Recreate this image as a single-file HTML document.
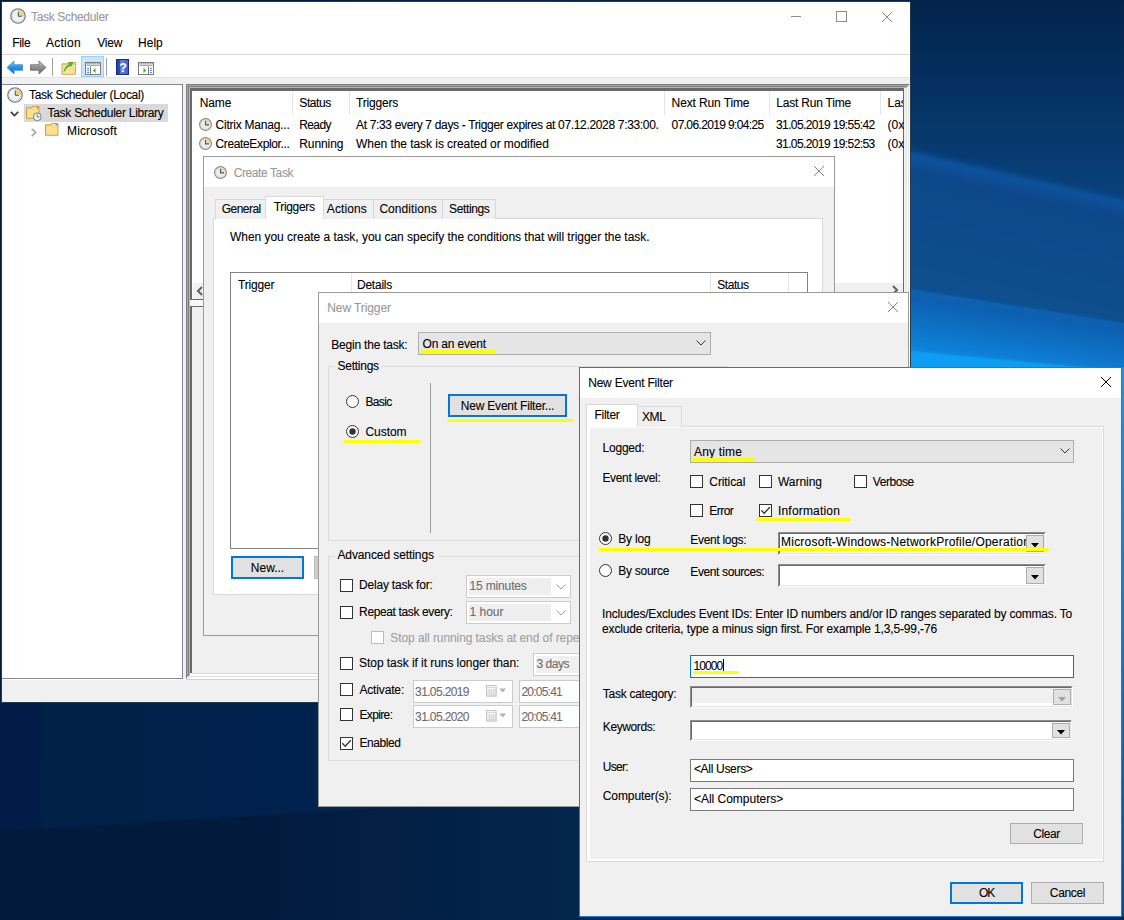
<!DOCTYPE html>
<html><head><meta charset="utf-8"><style>
*{box-sizing:border-box;margin:0;padding:0}
html,body{width:1124px;height:920px;overflow:hidden}
body{position:relative;font-family:"Liberation Sans", sans-serif;font-size:12px;color:#000;background:#05234a}
.a{position:absolute}
.t{position:absolute;white-space:pre;line-height:15px;height:15px;font-size:12px;-webkit-text-stroke:0.1px currentColor}
svg{position:absolute;overflow:visible}
</style></head><body>
<svg class="a" style="left:0;top:0" width="1124" height="920">
<defs>
<linearGradient id="wtop" x1="0" y1="0" x2="0" y2="1"><stop offset="0" stop-color="#02234b"/><stop offset="1" stop-color="#0a4886"/></linearGradient>
<linearGradient id="wmid" gradientUnits="userSpaceOnUse" x1="1017" y1="178" x2="990" y2="300"><stop offset="0" stop-color="#0a54a0"/><stop offset="0.12" stop-color="#08478a"/><stop offset="1" stop-color="#07508f"/></linearGradient>
<linearGradient id="wlow" gradientUnits="userSpaceOnUse" x1="1017" y1="305" x2="1007" y2="370"><stop offset="0" stop-color="#0c66b8"/><stop offset="0.1" stop-color="#0a5eae"/><stop offset="1" stop-color="#0a88e0"/></linearGradient>
<linearGradient id="wbl" x1="0" y1="0" x2="1" y2="0"><stop offset="0" stop-color="#021f46"/><stop offset="1" stop-color="#032a5a"/></linearGradient>
<filter id="bl" x="-10%" y="-10%" width="120%" height="120%"><feGaussianBlur stdDeviation="3"/></filter>
<filter id="bl1" x="-10%" y="-10%" width="120%" height="120%"><feGaussianBlur stdDeviation="1"/></filter>
</defs>
<linearGradient id="wbase" gradientUnits="userSpaceOnUse" x1="250" y1="0" x2="600" y2="0"><stop offset="0" stop-color="#021a3c"/><stop offset="1" stop-color="#03274f"/></linearGradient>
<rect width="1124" height="920" fill="url(#wbase)"/>
<rect x="600" y="0" width="524" height="240" fill="url(#wtop)"/>
<polygon points="600,80 1124,200 1200,218 1200,340 1124,330 600,250" fill="url(#wmid)" filter="url(#bl)"/>
<polygon points="600,240 1124,323 1200,335 1200,960 600,960" fill="url(#wlow)" filter="url(#bl1)"/>
<polygon points="700,331 1124,371 1200,378 1200,960 700,960" fill="#0c9ef4" filter="url(#bl1)"/>
<polygon points="0,702 600,702 600,795 0,831" fill="url(#wbl)" filter="url(#bl1)"/>
<linearGradient id="wrs" x1="0" y1="0" x2="0" y2="1"><stop offset="0" stop-color="#2294e4"/><stop offset="0.5" stop-color="#1a74c4"/><stop offset="1" stop-color="#0b4788"/></linearGradient>
<rect x="1121" y="367" width="10" height="560" fill="url(#wrs)"/>
<rect x="579" y="916" width="560" height="10" fill="#04285a"/>
</svg>
<div class="a" style="left:1px;top:1px;width:910px;height:702px;background:#fff;border:1px solid #26384e"></div>
<svg class="a" style="left:10px;top:8px" width="16" height="16" viewBox="0 0 16 16"><g transform="scale(1.0)"><circle cx="8" cy="8" r="7.2" fill="#eef3f8" stroke="#7c7c7c" stroke-width="1.3"/><path d="M8 1.9 A6.1 6.1 0 0 1 14.1 8 L8 8 Z" fill="#f1d27e"/><circle cx="8" cy="8" r="6.1" fill="none" stroke="#c3ccd6" stroke-width="0.6"/><path d="M8.3 3.8 V8.3 H11.8" fill="none" stroke="#43596c" stroke-width="1"/></g></svg>
<span class="t" style="left:31px;top:10px;color:#999;letter-spacing:-0.332px;">Task Scheduler</span>
<div class="a" style="left:791px;top:16px;width:10px;height:1px;background:#8c8c8c"></div>
<div class="a" style="left:836px;top:11px;width:11px;height:11px;border:1px solid #8c8c8c"></div>
<svg class="a" style="left:881px;top:11px" width="12" height="12" viewBox="0 0 12 12"><path d="M1 1 L11 11 M11 1 L1 11" stroke="#8c8c8c" stroke-width="1"/></svg>
<span class="t" style="left:12.3px;top:36px;color:#000;letter-spacing:-0.336px;">File</span>
<span class="t" style="left:46px;top:36px;color:#000;letter-spacing:0.240px;">Action</span>
<span class="t" style="left:97.2px;top:36px;color:#000;letter-spacing:-0.199px;">View</span>
<span class="t" style="left:138.1px;top:36px;color:#000;letter-spacing:-0.022px;">Help</span>
<div class="a" style="left:2px;top:54px;width:908px;height:1px;background:#d7d7d7"></div>
<svg class="a" style="left:6px;top:60px" width="18" height="15" viewBox="0 0 18 15"><defs><linearGradient id="ab" x1="0" y1="0" x2="0" y2="1"><stop offset="0" stop-color="#7cc8f8"/><stop offset="0.5" stop-color="#1e95e8"/><stop offset="1" stop-color="#0a6fc8"/></linearGradient></defs><path d="M1 7.5 L8 1 V4.7 H16.5 V10.3 H8 V14 Z" fill="url(#ab)" stroke="#3c8ed0" stroke-width="0.8"/></svg>
<svg class="a" style="left:29px;top:60px" width="18" height="15" viewBox="0 0 18 15"><defs><linearGradient id="ag" x1="0" y1="0" x2="0" y2="1"><stop offset="0" stop-color="#c8c8c8"/><stop offset="0.5" stop-color="#8e8e8e"/><stop offset="1" stop-color="#6a6a6a"/></linearGradient></defs><path d="M17 7.5 L10 1 V4.7 H1.5 V10.3 H10 V14 Z" fill="url(#ag)" stroke="#707070" stroke-width="0.8"/></svg>
<div class="a" style="left:52px;top:58px;width:1px;height:18px;background:#a0a0a0"></div>
<svg class="a" style="left:61px;top:60px" width="16" height="16" viewBox="0 0 16 16"><path d="M1 3.8 H6 L7 2.4 H14.6 V14.3 H1 Z" fill="#f4d27c" stroke="#c49a3c" stroke-width="0.8"/><path d="M1.8 5 H13.8 V13.6 H1.8Z" fill="#fbe193"/><path d="M3 11.5 Q4 6 8.5 4.2 L7.6 2.6 L12 2.8 L9.8 6.6 L9.3 5.2 Q5.5 7 3 11.5Z" fill="#3fbf3a" stroke="#2a9a2a" stroke-width="0.5"/></svg>
<div class="a" style="left:81px;top:56px;width:23px;height:21px;background:#cce4f7;border:1px solid #99d1ff"></div>
<svg class="a" style="left:85px;top:62px" width="16" height="13" viewBox="0 0 16 13"><rect x="0.5" y="0.5" width="15" height="12" fill="#fff" stroke="#7d7d7d"/><rect x="1" y="1" width="14" height="3" fill="#e6e6e6"/><path d="M1.5 1.8 H11 M1.5 3.6 H14.5" stroke="#8a8a8a" stroke-width="0.7"/><rect x="12" y="1.2" width="1" height="1" fill="#777"/><rect x="13.7" y="1.2" width="1" height="1" fill="#777"/><path d="M5.5 4.5 V12" stroke="#7d7d7d" stroke-width="1"/><path d="M2.2 6.5 H4 M2.2 8.5 H4 M2.2 10.5 H4" stroke="#3f7fd0" stroke-width="1"/><path d="M10.5 6 V11 L7.8 8.5Z" fill="#3cae2c"/></svg>
<div class="a" style="left:106px;top:58px;width:1px;height:18px;background:#a0a0a0"></div>
<svg class="a" style="left:116px;top:59px" width="13" height="16" viewBox="0 0 13 16"><defs><linearGradient id="hb" x1="0" y1="0" x2="1" y2="0"><stop offset="0" stop-color="#1b3e9e"/><stop offset="0.3" stop-color="#2a50b8"/><stop offset="0.35" stop-color="#6a88dc"/><stop offset="1" stop-color="#3a5ec4"/></linearGradient></defs><rect x="0.5" y="0.5" width="12" height="15" fill="url(#hb)" stroke="#1a2f80"/><text x="7" y="13" font-family="Liberation Sans" font-weight="bold" font-size="12.5" fill="#fff" text-anchor="middle">?</text></svg>
<svg class="a" style="left:138px;top:62px" width="16" height="13" viewBox="0 0 16 13"><rect x="0.5" y="0.5" width="15" height="12" fill="#fff" stroke="#7d7d7d"/><rect x="1" y="1" width="14" height="3" fill="#e6e6e6"/><path d="M1.5 1.8 H11 M1.5 3.6 H14.5" stroke="#8a8a8a" stroke-width="0.7"/><rect x="12" y="1.2" width="1" height="1" fill="#777"/><rect x="13.7" y="1.2" width="1" height="1" fill="#777"/><path d="M10.5 4.5 V12" stroke="#7d7d7d" stroke-width="1"/><path d="M12 6.5 H13.8 M12 8.5 H13.8 M12 10.5 H13.8" stroke="#3f7fd0" stroke-width="1"/><path d="M5.5 6 V11 L8.2 8.5Z" fill="#3cae2c"/></svg>
<div class="a" style="left:2px;top:77px;width:908px;height:7px;background:#f0f0f0;border-top:1px solid #e3e3e3"></div>
<div class="a" style="left:2px;top:84px;width:181px;height:595px;background:#fff;border-top:1px solid #828790;border-right:1px solid #828790;border-bottom:1px solid #828790"></div>
<svg class="a" style="left:7px;top:87px" width="16" height="16" viewBox="0 0 16 16"><g transform="scale(1.0)"><circle cx="8" cy="8" r="7.2" fill="#eef3f8" stroke="#7c7c7c" stroke-width="1.3"/><path d="M8 1.9 A6.1 6.1 0 0 1 14.1 8 L8 8 Z" fill="#f1d27e"/><circle cx="8" cy="8" r="6.1" fill="none" stroke="#c3ccd6" stroke-width="0.6"/><path d="M8.3 3.8 V8.3 H11.8" fill="none" stroke="#43596c" stroke-width="1"/></g></svg>
<span class="t" style="left:29px;top:88px;color:#000;letter-spacing:-0.321px;">Task Scheduler (Local)</span>
<div class="a" style="left:24px;top:104px;width:144px;height:18px;background:#d9d9d9"></div>
<svg class="a" style="left:10px;top:111px" width="9" height="6" viewBox="0 0 9 6"><path d="M0.8 0.8 L4.5 4.5 L8.2 0.8" fill="none" stroke="#3c3c3c" stroke-width="1.7"/></svg>
<svg class="a" style="left:26px;top:106px" width="16" height="16" viewBox="0 0 16 16"><path d="M0.5 1.8 H5.8 L6.6 0.5 H13 V12.3 H0.5Z" fill="#f6d47a" stroke="#c49a3c" stroke-width="0.9"/><path d="M1.3 3.2 H12.2 V11.5 H1.3Z" fill="#fbe08f"/><rect x="8" y="1.3" width="2.6" height="1" fill="#fff"/><rect x="10.6" y="1.2" width="1.6" height="1.2" fill="#3a8ee0"/><circle cx="11.3" cy="10.8" r="3.9" fill="#e9f4f8" stroke="#707070" stroke-width="0.9"/><path d="M11.3 8.4 V11 H13.4" fill="none" stroke="#45596b" stroke-width="0.8"/></svg>
<span class="t" style="left:47.5px;top:106px;color:#000;letter-spacing:-0.276px;">Task Scheduler Library</span>
<svg class="a" style="left:31px;top:128px" width="6" height="9" viewBox="0 0 6 9"><path d="M0.8 0.8 L4.6 4.5 L0.8 8.2" fill="none" stroke="#a6a6a6" stroke-width="1.7"/></svg>
<svg class="a" style="left:45px;top:123px" width="16" height="16" viewBox="0 0 16 16"><path d="M0.5 1.8 H5.8 L6.6 0.5 H13 V12.3 H0.5Z" fill="#f6d47a" stroke="#c49a3c" stroke-width="0.9"/><path d="M1.3 3.2 H12.2 V11.5 H1.3Z" fill="#fbe08f"/><rect x="8" y="1.3" width="2.6" height="1" fill="#fff"/><rect x="10.6" y="1.2" width="1.6" height="1.2" fill="#3a8ee0"/></svg>
<span class="t" style="left:67px;top:124px;color:#000;letter-spacing:0.146px;">Microsoft</span>
<div class="a" style="left:183px;top:84px;width:3px;height:595px;background:#f0f0f0"></div>
<div class="a" style="left:186px;top:84px;width:724px;height:595px;background:#f0f0f0;border-top:1px solid #7a7a7a;border-left:1px solid #7a7a7a;border-right:1px solid #fff;border-bottom:1px solid #fff"></div>
<div class="a" style="left:187px;top:85px;width:722px;height:593px;border-top:1px solid #a8a8a8;border-left:1px solid #a8a8a8;border-right:1px solid #e3e3e3;border-bottom:1px solid #e3e3e3"></div>
<div class="a" style="left:188px;top:86px;width:720px;height:591px;border-top:1px solid #808080;border-left:1px solid #808080;border-right:1px solid #fff;border-bottom:1px solid #fff"></div>
<div class="a" style="left:189px;top:87px;width:718px;height:589px;border-top:1px solid #b4b4b4;border-left:1px solid #b4b4b4;border-right:1px solid #e3e3e3;border-bottom:1px solid #e3e3e3"></div>
<div class="a" style="left:190px;top:88px;width:714px;height:212px;background:#fff;border-top:3px solid #696969;border-left:2px solid #696969;border-right:1px solid #696969"></div>
<div class="a" style="left:292px;top:91px;width:1px;height:24px;background:#e5e5e5"></div>
<div class="a" style="left:349px;top:91px;width:1px;height:24px;background:#e5e5e5"></div>
<div class="a" style="left:664px;top:91px;width:1px;height:24px;background:#e5e5e5"></div>
<div class="a" style="left:769px;top:91px;width:1px;height:24px;background:#e5e5e5"></div>
<div class="a" style="left:880px;top:91px;width:1px;height:24px;background:#e5e5e5"></div>
<span class="t" style="left:199.7px;top:96px;color:#000;letter-spacing:-0.129px;">Name</span>
<span class="t" style="left:299.3px;top:96px;color:#000;letter-spacing:-0.422px;">Status</span>
<span class="t" style="left:356px;top:96px;color:#000;letter-spacing:-0.197px;">Triggers</span>
<span class="t" style="left:671.6px;top:96px;color:#000;letter-spacing:-0.120px;">Next Run Time</span>
<span class="t" style="left:776.2px;top:96px;color:#000;letter-spacing:-0.198px;">Last Run Time</span>
<span class="t" style="left:887.5px;top:96px;color:#000;width:15.5px;overflow:hidden;">Las</span>
<svg class="a" style="left:199px;top:118px" width="13" height="13" viewBox="0 0 13 13"><circle cx="6.5" cy="6.5" r="5.9" fill="#ededed" stroke="#8a8a8a" stroke-width="1.2"/><path d="M6.5 1.6 A4.9 4.9 0 0 1 11.4 6.5 L6.5 6.5 Z" fill="#f4d8a0"/><circle cx="6.5" cy="6.5" r="4.9" fill="none" stroke="#c8c8c8" stroke-width="0.6"/><path d="M6.5 2.8 V6.9 H10" fill="none" stroke="#505860" stroke-width="1.1"/></svg>
<svg class="a" style="left:199px;top:137px" width="13" height="13" viewBox="0 0 13 13"><circle cx="6.5" cy="6.5" r="5.9" fill="#ededed" stroke="#8a8a8a" stroke-width="1.2"/><path d="M6.5 1.6 A4.9 4.9 0 0 1 11.4 6.5 L6.5 6.5 Z" fill="#f4d8a0"/><circle cx="6.5" cy="6.5" r="4.9" fill="none" stroke="#c8c8c8" stroke-width="0.6"/><path d="M6.5 2.8 V6.9 H10" fill="none" stroke="#505860" stroke-width="1.1"/></svg>
<span class="t" style="left:215.5px;top:117.5px;color:#000;letter-spacing:-0.224px;">Citrix Manag...</span>
<span class="t" style="left:215.5px;top:136.5px;color:#000;letter-spacing:-0.358px;">CreateExplor...</span>
<span class="t" style="left:299.3px;top:117.5px;color:#000;letter-spacing:-0.637px;">Ready</span>
<span class="t" style="left:299.3px;top:136.5px;color:#000;letter-spacing:-0.100px;">Running</span>
<span class="t" style="left:356px;top:117.5px;color:#000;letter-spacing:-0.334px;">At 7:33 every 7 days - Trigger expires at 07.12.2028 7:33:00.</span>
<span class="t" style="left:356px;top:136.5px;color:#000;letter-spacing:-0.055px;">When the task is created or modified</span>
<span class="t" style="left:671.6px;top:117.5px;color:#000;letter-spacing:-0.635px;">07.06.2019 9:04:25</span>
<span class="t" style="left:776px;top:117.5px;color:#000;letter-spacing:-0.606px;">31.05.2019 19:55:42</span>
<span class="t" style="left:776px;top:136.5px;color:#000;letter-spacing:-0.606px;">31.05.2019 19:52:53</span>
<span class="t" style="left:887.5px;top:117.5px;color:#000;width:16px;overflow:hidden;">(0x</span>
<span class="t" style="left:887.5px;top:136.5px;color:#000;width:16px;overflow:hidden;">(0x4</span>
<div class="a" style="left:193px;top:283px;width:710px;height:16px;background:#f0f0f0"></div>
<svg class="a" style="left:196px;top:286px" width="8" height="10" viewBox="0 0 8 10"><path d="M6 1 L2 5 L6 9" fill="none" stroke="#606060" stroke-width="2"/></svg>
<svg class="a" style="left:891px;top:285px" width="8" height="10" viewBox="0 0 8 10"><path d="M2 1 L6 5 L2 9" fill="none" stroke="#606060" stroke-width="2"/></svg>
<div class="a" style="left:190px;top:299px;width:714px;height:1px;background:#696969"></div>
<div class="a" style="left:190px;top:300px;width:714px;height:6px;background:#f7f7f7"></div>
<div class="a" style="left:190px;top:306px;width:714px;height:1px;background:#696969"></div>
<div class="a" style="left:190px;top:307px;width:2px;height:366px;background:#696969"></div>
<div class="a" style="left:903px;top:307px;width:1px;height:366px;background:#696969"></div>
<div class="a" style="left:192px;top:673px;width:712px;height:1px;background:#d9d9d9"></div>
<div class="a" style="left:190px;top:674px;width:714px;height:2px;background:#fff"></div>
<div class="a" style="left:188px;top:676px;width:718px;height:1px;background:#e0e0e0"></div>
<div class="a" style="left:187px;top:677px;width:720px;height:2px;background:#fff"></div>
<div class="a" style="left:186px;top:679px;width:724px;height:1px;background:#d0d0d0"></div>
<div class="a" style="left:2px;top:680px;width:908px;height:22px;background:#f0f0f0"></div>
<div class="a" style="left:203px;top:156px;width:632px;height:480px;background:#f0f0f0;border:1px solid #9a9a9a"></div>
<div class="a" style="left:204px;top:157px;width:630px;height:30px;background:#fff"></div>
<svg class="a" style="left:214px;top:166px" width="13" height="13" viewBox="0 0 13 13"><circle cx="6.5" cy="6.5" r="5.9" fill="#ededed" stroke="#8a8a8a" stroke-width="1.2"/><path d="M6.5 1.6 A4.9 4.9 0 0 1 11.4 6.5 L6.5 6.5 Z" fill="#f4d8a0"/><circle cx="6.5" cy="6.5" r="4.9" fill="none" stroke="#c8c8c8" stroke-width="0.6"/><path d="M6.5 2.8 V6.9 H10" fill="none" stroke="#505860" stroke-width="1.1"/></svg>
<span class="t" style="left:233.7px;top:166px;color:#999;letter-spacing:-0.401px;">Create Task</span>
<svg class="a" style="left:813px;top:165px" width="12" height="12" viewBox="0 0 12 12"><path d="M1 1 L11 11 M11 1 L1 11" stroke="#8c8c8c" stroke-width="1"/></svg>
<div class="a" style="left:213px;top:218px;width:610px;height:377px;background:#fff;border:1px solid #d9d9d9"></div>
<div class="a" style="left:215px;top:199px;width:52px;height:20px;background:#f0f0f0;border:1px solid #d9d9d9;border-bottom:none"></div>
<span class="t" style="left:221.7px;top:202px;color:#000;letter-spacing:-0.529px;">General</span>
<div class="a" style="left:323px;top:199px;width:51px;height:20px;background:#f0f0f0;border:1px solid #d9d9d9;border-bottom:none"></div>
<span class="t" style="left:326.8px;top:202px;color:#000;letter-spacing:0.092px;">Actions</span>
<div class="a" style="left:373px;top:199px;width:70px;height:20px;background:#f0f0f0;border:1px solid #d9d9d9;border-bottom:none"></div>
<span class="t" style="left:379.4px;top:202px;color:#000;letter-spacing:0.060px;">Conditions</span>
<div class="a" style="left:442px;top:199px;width:54px;height:20px;background:#f0f0f0;border:1px solid #d9d9d9;border-bottom:none"></div>
<span class="t" style="left:449px;top:202px;color:#000;letter-spacing:-0.357px;">Settings</span>
<div class="a" style="left:265px;top:196px;width:59px;height:23px;background:#fff;border:1px solid #d9d9d9;border-bottom:none"></div>
<span class="t" style="left:273.7px;top:200px;color:#000;letter-spacing:-0.322px;">Triggers</span>
<span class="t" style="left:230px;top:230px;color:#000;letter-spacing:-0.033px;">When you create a task, you can specify the conditions that will trigger the task.</span>
<div class="a" style="left:230px;top:272px;width:578px;height:277px;background:#fff;border:1px solid #828282"></div>
<div class="a" style="left:351px;top:273px;width:1px;height:22px;background:#e5e5e5"></div>
<div class="a" style="left:710px;top:273px;width:1px;height:22px;background:#e5e5e5"></div>
<div class="a" style="left:788px;top:273px;width:1px;height:22px;background:#e5e5e5"></div>
<span class="t" style="left:238px;top:278px;color:#000;letter-spacing:-0.183px;">Trigger</span>
<span class="t" style="left:357px;top:278px;color:#000;letter-spacing:-0.241px;">Details</span>
<span class="t" style="left:717.3px;top:278px;color:#000;letter-spacing:-0.455px;">Status</span>
<div class="a" style="left:231px;top:556px;width:73px;height:23px;border:2px solid #0078d7;background:#e1e1e1"></div>
<span class="t" style="left:0px;top:561px;color:#000;left:231px;width:73px;text-align:center;">New...</span>
<div class="a" style="left:314px;top:556px;width:40px;height:23px;background:#cccccc;border:1px solid #bfbfbf"></div>
<div class="a" style="left:318px;top:292px;width:591px;height:515px;background:#f0f0f0;border:1px solid #9a9a9a"></div>
<div class="a" style="left:319px;top:293px;width:589px;height:30px;background:#fff"></div>
<span class="t" style="left:327.3px;top:301px;color:#999;letter-spacing:-0.099px;">New Trigger</span>
<svg class="a" style="left:887px;top:301px" width="12" height="12" viewBox="0 0 12 12"><path d="M1 1 L11 11 M11 1 L1 11" stroke="#8c8c8c" stroke-width="1"/></svg>
<span class="t" style="left:331.3px;top:338px;color:#000;letter-spacing:-0.213px;">Begin the task:</span>
<div class="a" style="left:418px;top:332px;width:293px;height:23px;background:#e5e5e5;border:1px solid #adadad"></div>
<span class="t" style="left:422.6px;top:337px;color:#000;letter-spacing:-0.199px;">On an event</span>
<svg class="a" style="left:696px;top:340px" width="10" height="6" viewBox="0 0 10 6"><path d="M0.5 0.5 L5 5 L9.5 0.5" fill="none" stroke="#333" stroke-width="1"/></svg>
<div class="a" style="left:421px;top:350px;width:75px;height:3px;background:#ffff00;border-radius:1.5px"></div>
<div class="a" style="left:328px;top:366px;width:400px;height:175px;border:1px solid #dcdcdc"></div>
<div class="a" style="left:335px;top:359px;width:46px;height:14px;background:#f0f0f0"></div>
<span class="t" style="left:337.6px;top:359px;color:#000;letter-spacing:-0.270px;">Settings</span>
<svg class="a" style="left:346px;top:395px" width="13" height="13" viewBox="0 0 13 13"><circle cx="6.5" cy="6.5" r="6" fill="#fff" stroke="#333" stroke-width="1"/></svg>
<span class="t" style="left:365.5px;top:395px;color:#000;letter-spacing:-0.669px;">Basic</span>
<svg class="a" style="left:346px;top:425px" width="13" height="13" viewBox="0 0 13 13"><circle cx="6.5" cy="6.5" r="6" fill="#fff" stroke="#333" stroke-width="1"/><circle cx="6.5" cy="6.5" r="3.2" fill="#333"/></svg>
<span class="t" style="left:365.5px;top:425px;color:#000;letter-spacing:-0.057px;">Custom</span>
<div class="a" style="left:343px;top:440px;width:78px;height:3px;background:#ffff00;border-radius:1.5px"></div>
<div class="a" style="left:430px;top:383px;width:1px;height:150px;background:#a0a0a0"></div>
<div class="a" style="left:448px;top:394px;width:119px;height:23px;border:2px solid #0078d7;background:#e1e1e1"></div>
<span class="t" style="left:0px;top:399px;color:#000;letter-spacing:-0.209px;left:448px;width:119px;text-align:center;">New Event Filter...</span>
<div class="a" style="left:447px;top:419px;width:127px;height:3px;background:#ffff00;border-radius:1.5px"></div>
<div class="a" style="left:328px;top:556px;width:400px;height:205px;border:1px solid #dcdcdc"></div>
<div class="a" style="left:335px;top:549px;width:104px;height:14px;background:#f0f0f0"></div>
<span class="t" style="left:337.4px;top:548px;color:#000;letter-spacing:-0.092px;">Advanced settings</span>
<div class="a" style="left:340px;top:579px;width:13px;height:13px;border:1px solid #333;background:#fff"></div>
<span class="t" style="left:359.1px;top:578px;color:#000;letter-spacing:-0.214px;">Delay task for:</span>
<div class="a" style="left:466px;top:575px;width:105px;height:23px;background:#fff;border:1px solid #cccccc"></div>
<div class="a" style="left:469px;top:578px;width:82px;height:17px;background:#efefef"></div>
<span class="t" style="left:469.5px;top:578.5px;color:#6d6d6d;letter-spacing:-0.150px;">15 minutes</span>
<svg class="a" style="left:556px;top:584px" width="10" height="6" viewBox="0 0 10 6"><path d="M0.5 0.5 L5 5 L9.5 0.5" fill="none" stroke="#a0a0a0" stroke-width="1"/></svg>
<div class="a" style="left:340px;top:606px;width:13px;height:13px;border:1px solid #333;background:#fff"></div>
<span class="t" style="left:359.1px;top:605px;color:#000;letter-spacing:-0.370px;">Repeat task every:</span>
<div class="a" style="left:466px;top:601px;width:105px;height:23px;background:#fff;border:1px solid #cccccc"></div>
<div class="a" style="left:469px;top:604px;width:82px;height:17px;background:#efefef"></div>
<span class="t" style="left:469.5px;top:604.5px;color:#6d6d6d;">1 hour</span>
<svg class="a" style="left:556px;top:610px" width="10" height="6" viewBox="0 0 10 6"><path d="M0.5 0.5 L5 5 L9.5 0.5" fill="none" stroke="#a0a0a0" stroke-width="1"/></svg>
<div class="a" style="left:371px;top:631px;width:13px;height:13px;border:1px solid #bcbcbc;background:#fff"></div>
<span class="t" style="left:390.3px;top:631px;color:#a0a0a0;letter-spacing:-0.084px;">Stop all running tasks at end of repe</span>
<div class="a" style="left:340px;top:657px;width:13px;height:13px;border:1px solid #333;background:#fff"></div>
<span class="t" style="left:359.1px;top:656px;color:#000;letter-spacing:-0.057px;">Stop task if it runs longer than:</span>
<div class="a" style="left:533px;top:653px;width:60px;height:23px;background:#fff;border:1px solid #cccccc"></div>
<div class="a" style="left:536px;top:656px;width:50px;height:17px;background:#f0f0f0"></div>
<span class="t" style="left:536.5px;top:657px;color:#6d6d6d;letter-spacing:-0.477px;">3 days</span>
<div class="a" style="left:340px;top:683px;width:13px;height:13px;border:1px solid #333;background:#fff"></div>
<span class="t" style="left:359.4px;top:683px;color:#000;letter-spacing:-0.148px;">Activate:</span>
<div class="a" style="left:413px;top:680px;width:100px;height:23px;background:#fff;border:1px solid #cccccc"></div>
<span class="t" style="left:415.1px;top:685px;color:#6d6d6d;letter-spacing:-0.636px;">31.05.2019</span>
<svg class="a" style="left:486px;top:685px" width="22" height="13" viewBox="0 0 22 13"><rect x="1.5" y="1.5" width="9.5" height="10.5" fill="#e6e6e6"/><rect x="0.5" y="0.5" width="9.5" height="10.5" fill="#f6f6f6" stroke="#c4c4c4"/><path d="M1 2.5 H9.5 M3.5 4 V10.5 M5.8 4 V10.5 M8 4 V10.5 M1.5 5.5 H9.5 M1.5 7.5 H9.5 M1.5 9.5 H9.5" stroke="#d4d4d4" stroke-width="0.8"/><path d="M13.2 3.6 H20.2 L16.7 7.6Z" fill="#b4b4b4"/></svg>
<div class="a" style="left:519px;top:680px;width:70px;height:23px;background:#fff;border:1px solid #cccccc"></div>
<span class="t" style="left:521.4px;top:685px;color:#6d6d6d;letter-spacing:-0.765px;">20:05:41</span>
<div class="a" style="left:340px;top:708px;width:13px;height:13px;border:1px solid #333;background:#fff"></div>
<span class="t" style="left:359.4px;top:708px;color:#000;letter-spacing:-0.623px;">Expire:</span>
<div class="a" style="left:413px;top:705px;width:100px;height:23px;background:#fff;border:1px solid #cccccc"></div>
<span class="t" style="left:415.1px;top:710px;color:#6d6d6d;letter-spacing:-0.636px;">31.05.2020</span>
<svg class="a" style="left:486px;top:710px" width="22" height="13" viewBox="0 0 22 13"><rect x="1.5" y="1.5" width="9.5" height="10.5" fill="#e6e6e6"/><rect x="0.5" y="0.5" width="9.5" height="10.5" fill="#f6f6f6" stroke="#c4c4c4"/><path d="M1 2.5 H9.5 M3.5 4 V10.5 M5.8 4 V10.5 M8 4 V10.5 M1.5 5.5 H9.5 M1.5 7.5 H9.5 M1.5 9.5 H9.5" stroke="#d4d4d4" stroke-width="0.8"/><path d="M13.2 3.6 H20.2 L16.7 7.6Z" fill="#b4b4b4"/></svg>
<div class="a" style="left:519px;top:705px;width:70px;height:23px;background:#fff;border:1px solid #cccccc"></div>
<span class="t" style="left:521.4px;top:710px;color:#6d6d6d;letter-spacing:-0.765px;">20:05:41</span>
<div class="a" style="left:340px;top:737px;width:13px;height:13px;border:1px solid #333;background:#fff"></div>
<svg class="a" style="left:340px;top:737px" width="13" height="13" viewBox="0 0 13 13"><path d="M2.3 6.3 L5.2 9.3 L10.8 3.2" fill="none" stroke="#333" stroke-width="1.3"/></svg>
<span class="t" style="left:359.4px;top:736px;color:#000;letter-spacing:-0.435px;">Enabled</span>
<div class="a" style="left:579px;top:367px;width:543px;height:550px;background:#f0f0f0;border:1px solid #1a7fd4"></div>
<div class="a" style="left:580px;top:368px;width:541px;height:30px;background:#fff"></div>
<span class="t" style="left:588.2px;top:376px;color:#000;letter-spacing:-0.208px;">New Event Filter</span>
<svg class="a" style="left:1100px;top:376px" width="12" height="12" viewBox="0 0 12 12"><path d="M1 1 L11 11 M11 1 L1 11" stroke="#000" stroke-width="1"/></svg>
<div class="a" style="left:586px;top:426px;width:518px;height:436px;background:#fff;border:1px solid #d9d9d9"></div>
<div class="a" style="left:590px;top:428px;width:512px;height:431px;background:#f0f0f0"></div>
<div class="a" style="left:637px;top:406px;width:45px;height:21px;background:#f0f0f0;border:1px solid #d9d9d9;border-bottom:none"></div>
<span class="t" style="left:642px;top:410px;color:#000;letter-spacing:-0.429px;">XML</span>
<div class="a" style="left:586px;top:404px;width:52px;height:23px;background:#fff;border:1px solid #d9d9d9;border-bottom:none"></div>
<span class="t" style="left:594.5px;top:408px;color:#000;letter-spacing:-0.279px;">Filter</span>
<span class="t" style="left:602.5px;top:441px;color:#000;letter-spacing:-0.213px;">Logged:</span>
<div class="a" style="left:690px;top:440px;width:384px;height:23px;background:#e5e5e5;border:1px solid #adadad"></div>
<span class="t" style="left:694.1px;top:445px;color:#000;letter-spacing:0.164px;">Any time</span>
<svg class="a" style="left:1060px;top:448px" width="10" height="6" viewBox="0 0 10 6"><path d="M0.5 0.5 L5 5 L9.5 0.5" fill="none" stroke="#333" stroke-width="1"/></svg>
<div class="a" style="left:691px;top:458px;width:64px;height:3px;background:#ffff00;border-radius:1.5px"></div>
<span class="t" style="left:602.4px;top:471px;color:#000;letter-spacing:-0.337px;">Event level:</span>
<div class="a" style="left:690px;top:475px;width:13px;height:13px;border:1px solid #333;background:#fff"></div>
<span class="t" style="left:709.3px;top:475px;color:#000;letter-spacing:-0.084px;">Critical</span>
<div class="a" style="left:759px;top:475px;width:13px;height:13px;border:1px solid #333;background:#fff"></div>
<span class="t" style="left:778px;top:475px;color:#000;letter-spacing:-0.036px;">Warning</span>
<div class="a" style="left:854px;top:475px;width:13px;height:13px;border:1px solid #333;background:#fff"></div>
<span class="t" style="left:872.8px;top:475px;color:#000;letter-spacing:-0.435px;">Verbose</span>
<div class="a" style="left:690px;top:504px;width:13px;height:13px;border:1px solid #333;background:#fff"></div>
<span class="t" style="left:709.3px;top:504px;color:#000;letter-spacing:-0.534px;">Error</span>
<div class="a" style="left:759px;top:504px;width:13px;height:13px;border:1px solid #333;background:#fff"></div>
<svg class="a" style="left:759px;top:504px" width="13" height="13" viewBox="0 0 13 13"><path d="M2.3 6.3 L5.2 9.3 L10.8 3.2" fill="none" stroke="#333" stroke-width="1.3"/></svg>
<span class="t" style="left:778px;top:504px;color:#000;letter-spacing:0.179px;">Information</span>
<div class="a" style="left:756px;top:518px;width:95px;height:3px;background:#ffff00;border-radius:1.5px"></div>
<svg class="a" style="left:599px;top:532px" width="13" height="13" viewBox="0 0 13 13"><circle cx="6.5" cy="6.5" r="6" fill="#fff" stroke="#333" stroke-width="1"/><circle cx="6.5" cy="6.5" r="3.2" fill="#333"/></svg>
<span class="t" style="left:618.2px;top:532px;color:#000;letter-spacing:-0.160px;">By log</span>
<span class="t" style="left:690.3px;top:533px;color:#000;letter-spacing:-0.307px;">Event logs:</span>
<div class="a" style="left:778px;top:532px;width:268px;height:23px;background:#fff;border-top:1px solid #8c8c8c;border-left:1px solid #8c8c8c;border-right:1px solid #fff;border-bottom:1px solid #fff"></div>
<div class="a" style="left:779px;top:533px;width:266px;height:21px;background:#fff;border-top:1px solid #696969;border-left:1px solid #696969;border-right:1px solid #e3e3e3;border-bottom:1px solid #e3e3e3"></div>
<span class="t" style="left:781px;top:534.5px;color:#000;letter-spacing:0.233px;width:246px;overflow:hidden;">Microsoft-Windows-NetworkProfile/Operational</span>
<div class="a" style="left:1026px;top:535px;width:18px;height:17px;background:#e1e1e1;border:1px solid #adadad"></div>
<svg class="a" style="left:1030.5px;top:543px" width="9" height="5" viewBox="0 0 9 5"><path d="M0 0 H8 L4 4.5Z" fill="#000"/></svg>
<div class="a" style="left:598px;top:548px;width:451px;height:3px;background:#ffff00;border-radius:1.5px"></div>
<svg class="a" style="left:599px;top:564px" width="13" height="13" viewBox="0 0 13 13"><circle cx="6.5" cy="6.5" r="6" fill="#fff" stroke="#333" stroke-width="1"/></svg>
<span class="t" style="left:618.2px;top:564px;color:#000;letter-spacing:-0.262px;">By source</span>
<span class="t" style="left:690.3px;top:565px;color:#000;letter-spacing:-0.384px;">Event sources:</span>
<div class="a" style="left:778px;top:564px;width:268px;height:23px;background:#fff;border-top:1px solid #8c8c8c;border-left:1px solid #8c8c8c;border-right:1px solid #fff;border-bottom:1px solid #fff"></div>
<div class="a" style="left:779px;top:565px;width:266px;height:21px;background:#fff;border-top:1px solid #696969;border-left:1px solid #696969;border-right:1px solid #e3e3e3;border-bottom:1px solid #e3e3e3"></div>
<div class="a" style="left:1026px;top:567px;width:18px;height:17px;background:#e1e1e1;border:1px solid #adadad"></div>
<svg class="a" style="left:1030.5px;top:575px" width="9" height="5" viewBox="0 0 9 5"><path d="M0 0 H8 L4 4.5Z" fill="#000"/></svg>
<span class="t" style="left:602px;top:607px;color:#000;letter-spacing:-0.186px;">Includes/Excludes Event IDs: Enter ID numbers and/or ID ranges separated by commas. To</span>
<span class="t" style="left:602px;top:622px;color:#000;letter-spacing:-0.147px;">exclude criteria, type a minus sign first. For example 1,3,5-99,-76</span>
<div class="a" style="left:690px;top:655px;width:384px;height:23px;background:#fff;border:1px solid #0078d7"></div>
<span class="t" style="left:693.4px;top:659px;color:#000;letter-spacing:-0.875px;">10000</span>
<div class="a" style="left:723px;top:659px;width:1px;height:15px;background:#000"></div>
<div class="a" style="left:693px;top:671px;width:46px;height:3px;background:#ffff00;border-radius:1.5px"></div>
<span class="t" style="left:602.8px;top:687px;color:#000;letter-spacing:-0.270px;">Task category:</span>
<div class="a" style="left:690px;top:686px;width:383px;height:22px;background:#fff;border-top:1px solid #8c8c8c;border-left:1px solid #8c8c8c;border-right:1px solid #fff;border-bottom:1px solid #fff"></div>
<div class="a" style="left:691px;top:687px;width:381px;height:20px;background:#f0f0f0;border-top:1px solid #696969;border-left:1px solid #696969;border-right:1px solid #e3e3e3;border-bottom:1px solid #e3e3e3"></div>
<div class="a" style="left:692px;top:703px;width:379px;height:3px;background:#fff"></div>
<div class="a" style="left:1053px;top:689px;width:18px;height:16px;background:#e1e1e1;border:1px solid #adadad"></div>
<svg class="a" style="left:1057.5px;top:697px" width="9" height="5" viewBox="0 0 9 5"><path d="M0 0 H8 L4 4.5Z" fill="#a0a0a0"/></svg>
<span class="t" style="left:602.8px;top:720px;color:#000;letter-spacing:-0.392px;">Keywords:</span>
<div class="a" style="left:690px;top:720px;width:382px;height:21px;background:#fff;border-top:1px solid #8c8c8c;border-left:1px solid #8c8c8c;border-right:1px solid #fff;border-bottom:1px solid #fff"></div>
<div class="a" style="left:691px;top:721px;width:380px;height:19px;background:#fff;border-top:1px solid #696969;border-left:1px solid #696969;border-right:1px solid #e3e3e3;border-bottom:1px solid #e3e3e3"></div>
<div class="a" style="left:1052px;top:723px;width:18px;height:15px;background:#e1e1e1;border:1px solid #adadad"></div>
<svg class="a" style="left:1056.5px;top:730px" width="9" height="5" viewBox="0 0 9 5"><path d="M0 0 H8 L4 4.5Z" fill="#000"/></svg>
<span class="t" style="left:602.8px;top:760px;color:#000;letter-spacing:-0.734px;">User:</span>
<div class="a" style="left:690px;top:759px;width:384px;height:23px;background:#fff;border:1px solid #7a7a7a"></div>
<span class="t" style="left:693.9px;top:762px;color:#000;letter-spacing:-0.303px;">&lt;All Users&gt;</span>
<span class="t" style="left:602.8px;top:789px;color:#000;letter-spacing:-0.101px;">Computer(s):</span>
<div class="a" style="left:690px;top:788px;width:384px;height:23px;background:#fff;border:1px solid #7a7a7a"></div>
<span class="t" style="left:693.9px;top:792px;color:#000;letter-spacing:-0.005px;">&lt;All Computers&gt;</span>
<div class="a" style="left:1010px;top:823px;width:73px;height:21px;border:1px solid #adadad;background:#e1e1e1"></div>
<span class="t" style="left:0px;top:827px;color:#000;letter-spacing:-0.438px;left:1010px;width:73px;text-align:center;">Clear</span>
<div class="a" style="left:950px;top:882px;width:73px;height:22px;border:2px solid #0078d7;background:#e1e1e1"></div>
<span class="t" style="left:0px;top:886px;color:#000;letter-spacing:-1.172px;left:950px;width:73px;text-align:center;">OK</span>
<div class="a" style="left:1031px;top:882px;width:73px;height:22px;border:1px solid #adadad;background:#e1e1e1"></div>
<span class="t" style="left:0px;top:886px;color:#000;letter-spacing:-0.327px;left:1031px;width:73px;text-align:center;">Cancel</span>
</body></html>
